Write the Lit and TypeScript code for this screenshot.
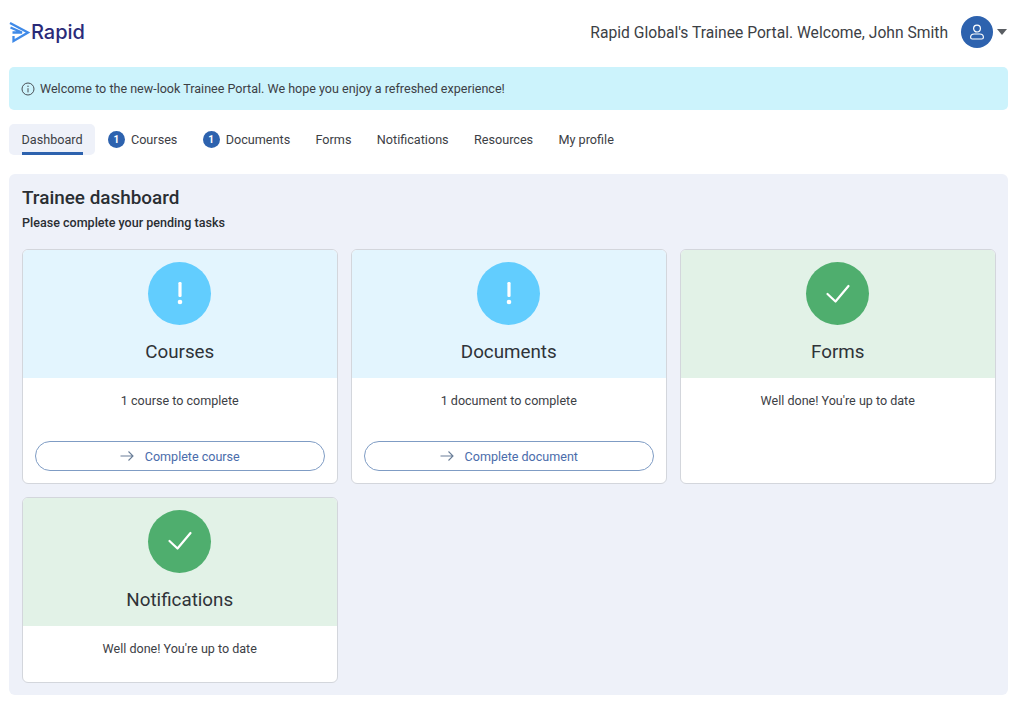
import { LitElement, css, html, svg } from 'lit';
import { customElement } from 'lit/decorators.js';

const tabs = [
	{ label: 'Dashboard', active: true },
	{ label: 'Courses', badge: 1 },
	{ label: 'Documents', badge: 1 },
	{ label: 'Forms' },
	{ label: 'Notifications' },
	{ label: 'Resources' },
	{ label: 'My profile' }
];

const cards = [
	{ title: 'Courses', text: '1 course to complete', action: 'Complete course', done: false },
	{ title: 'Documents', text: '1 document to complete', action: 'Complete document', done: false },
	{ title: 'Forms', text: "Well done! You're up to date", done: true },
	{ title: 'Notifications', text: "Well done! You're up to date", done: true }
];

const logoIcon = svg`<svg width="22" height="22" viewBox="0 0 22 22" fill="none" stroke="#3f8ae8" stroke-width="2.3">
	<path d="M1 2 L19 11.5 L4.5 20 L4.5 15"/>
	<path d="M1.5 6.5 L13 11.5 L3.5 11.5"/>
</svg>`;

const checkIcon = svg`<svg width="26" height="26" viewBox="0 0 26 26" fill="none" stroke="#fff" stroke-width="2.2" stroke-linecap="round" stroke-linejoin="round">
	<path d="M2.5 13 L10.5 20.5 L23.5 5"/>
</svg>`;

const alertIcon = svg`<svg width="8" height="24" viewBox="0 0 8 24" fill="#fff">
	<rect x="2.4" y="0" width="3.2" height="15" rx="1.2"/>
	<circle cx="4" cy="20" r="2.3"/>
</svg>`;

const arrowIcon = svg`<svg width="14" height="12" viewBox="0 0 14 12" fill="none" stroke="#6b7f99" stroke-width="1.1">
	<path d="M0.5 6 H13 M8.5 1.5 L13 6 L8.5 10.5"/>
</svg>`;

const infoIcon = svg`<svg width="14" height="14" viewBox="0 0 14 14" fill="none" stroke="#4a4f55" stroke-width="1">
	<circle cx="7" cy="7" r="6"/>
	<path d="M7 6.2 V10.4"/>
	<circle cx="7" cy="4.2" r="0.7" fill="#4a4f55" stroke="none"/>
</svg>`;

const userIcon = svg`<svg width="16" height="16" viewBox="0 0 16 16" fill="none" stroke="#fff" stroke-width="1.2">
	<circle cx="8" cy="4.6" r="3.4"/>
	<path d="M1.6 13.2 C1.6 11.2 3.4 10 5.2 10 H10.8 C12.6 10 14.4 11.2 14.4 13.2 C14.4 14.4 13.8 15 12.8 15 H3.2 C2.2 15 1.6 14.4 1.6 13.2 Z"/>
</svg>`;

@customElement('app-root')
export class AppRoot extends LitElement {
	static styles = css`
		:host {
			display: block;
			box-sizing: border-box;
			width: 1024px;
			height: 703px;
			padding: 0 16px 0 9px;
			background: #fff;
			font-family: Roboto, "Liberation Sans", sans-serif;
			font-size: 12.55px;
			color: #3c4045;
		}
		.top {
			display: flex;
			align-items: center;
			justify-content: space-between;
			height: 67px;
			box-sizing: border-box;
			padding-bottom: 3px;
		}
		.logo {
			display: flex;
			align-items: center;
		}
		.logo-name {
			font-family: Inter, Roboto, sans-serif;
			font-size: 20px;
			font-weight: 500;
			color: #2a2a78;
		}
		.user {
			display: flex;
			align-items: center;
			padding-right: 1px;
		}
		.welcome {
			font-size: 15.65px;
			margin-right: 13px;
		}
		.avatar {
			width: 32px;
			height: 32px;
			border-radius: 50%;
			background: #2d62ae;
			display: flex;
			align-items: center;
			justify-content: center;
		}
		.caret {
			width: 0;
			height: 0;
			margin-left: 4px;
			border-left: 5px solid transparent;
			border-right: 5px solid transparent;
			border-top: 6px solid #5a5e63;
		}
		.banner {
			display: flex;
			align-items: center;
			gap: 5px;
			height: 43px;
			padding-left: 12px;
			background: #ccf3fc;
			border-radius: 5px;
		}
		.tabs {
			display: flex;
			gap: 0.3px;
			margin-top: 14px;
			font-size: 12.65px;
		}
		.tab {
			position: relative;
			display: flex;
			align-items: center;
			gap: 6px;
			height: 31px;
			padding: 0 12.5px;
			border-radius: 5px;
		}
		.tab.active {
			background: #eef1f9;
		}
		.tab.active::after {
			content: '';
			position: absolute;
			left: 12.5px;
			right: 12.5px;
			bottom: 0;
			height: 3px;
			background: #2d62ae;
		}
		.badge {
			width: 17px;
			height: 17px;
			border-radius: 50%;
			background: #2d62ae;
			color: #fff;
			font-size: 10px;
			font-weight: 700;
			display: flex;
			align-items: center;
			justify-content: center;
		}
		.panel {
			margin-top: 19px;
			height: 521px;
			box-sizing: border-box;
			padding: 13px 12.5px;
			background: #eef1f9;
			border-radius: 6px;
		}
		h1 {
			margin: 0 0 0 0.5px;
			font-size: 18.9px;
			line-height: 22px;
			font-weight: 500;
			color: #2a2e33;
		}
		.sub {
			margin: 5px 0 0 0.5px;
			line-height: 18px;
			font-weight: 500;
			color: #2a2e33;
		}
		.grid {
			display: grid;
			grid-template-columns: repeat(3, 316.5px);
			grid-template-rows: 235px 186.5px;
			gap: 12.5px;
			margin-top: 17px;
		}
		.card {
			display: flex;
			flex-direction: column;
			box-sizing: border-box;
			background: #fff;
			border: 1px solid #d3d6dc;
			border-radius: 6px;
			overflow: hidden;
		}
		.head {
			display: flex;
			flex-direction: column;
			align-items: center;
			height: 128px;
			flex: none;
			box-sizing: border-box;
			padding-top: 12px;
		}
		.head.todo {
			background: #e3f5fe;
		}
		.head.done {
			background: #e2f2e7;
		}
		.circle {
			width: 63px;
			height: 63px;
			border-radius: 50%;
			display: flex;
			align-items: center;
			justify-content: center;
		}
		.todo .circle {
			background: #62cdfe;
		}
		.done .circle {
			background: #4fae6e;
		}
		h2 {
			margin: 16px 0 0;
			font-size: 18.8px;
			line-height: 22px;
			font-weight: 400;
			color: #2f3338;
		}
		.body {
			display: flex;
			flex-direction: column;
			flex: 1;
			align-items: center;
			padding: 15px 12.5px 12px;
		}
		.body p {
			margin: 0;
			line-height: 16px;
		}
		.btn {
			display: flex;
			align-items: center;
			justify-content: center;
			gap: 11px;
			box-sizing: border-box;
			width: 100%;
			height: 30px;
			margin-top: auto;
			border: 1px solid #7f9cc4;
			border-radius: 15px;
			color: #4a6cab;
		}
	`;

	render() {
		return html`
			<div class="top">
				<div class="logo">${logoIcon}<span class="logo-name">Rapid</span></div>
				<div class="user">
					<span class="welcome">Rapid Global's Trainee Portal. Welcome, John Smith</span>
					<span class="avatar">${userIcon}</span>
					<span class="caret"></span>
				</div>
			</div>
			<div class="banner">${infoIcon}<span>Welcome to the new-look Trainee Portal. We hope you enjoy a refreshed experience!</span></div>
			<nav class="tabs">
				${tabs.map(t => html`
					<div class="tab ${t.active ? 'active' : ''}">
						${t.badge ? html`<span class="badge">${t.badge}</span>` : ''}
						<span>${t.label}</span>
					</div>
				`)}
			</nav>
			<section class="panel">
				<h1>Trainee dashboard</h1>
				<p class="sub">Please complete your pending tasks</p>
				<div class="grid">
					${cards.map(c => html`
						<div class="card">
							<div class="head ${c.done ? 'done' : 'todo'}">
								<div class="circle">${c.done ? checkIcon : alertIcon}</div>
								<h2>${c.title}</h2>
							</div>
							<div class="body">
								<p>${c.text}</p>
								${c.action ? html`<div class="btn">${arrowIcon}<span>${c.action}</span></div>` : ''}
							</div>
						</div>
					`)}
				</div>
			</section>
		`;
	}
}
